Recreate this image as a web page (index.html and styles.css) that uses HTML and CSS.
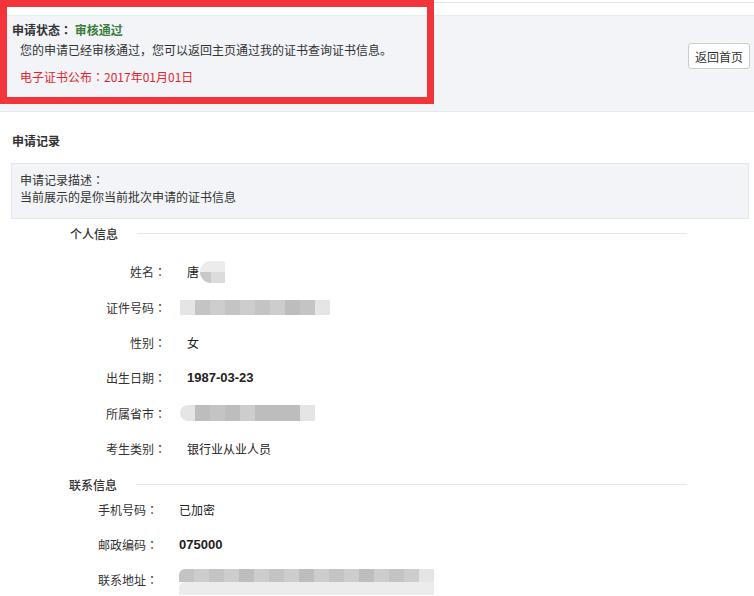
FILE: index.html
```html
<!DOCTYPE html>
<html lang="zh-CN">
<head>
  <meta charset="UTF-8">
  <meta name="viewport" content="width=device-width, initial-scale=1.0">
  <title>申请记录</title>
  <link rel="stylesheet" href="styles.css">
</head>
<body>
  <div class="topline"></div>

  <div class="status">
    <div class="status-text">
      <div class="status-title">申请状态<span class="colon">：</span> <span class="pass">审核通过</span></div>
      <div class="status-desc">您的申请已经审核通过，您可以返回主页通过我的证书查询证书信息。</div>
      <div class="status-date">电子证书公布<span class="colon">：</span>2017年01月01日</div>
    </div>
    <button class="btn-home">返回首页</button>
  </div>
  <div class="mark"></div>

  <h3 class="record-title">申请记录</h3>
  <div class="record-desc">
    申请记录描述<span class="colon">：</span><br>
    当前展示的是你当前批次申请的证书信息
  </div>

  <div class="group">
    <div class="group-head"><span>个人信息</span><i></i></div>
    <div class="row">
      <label>姓名<span class="colon">：</span></label>
      <span class="val">唐<b class="blur-name"><i></i><i></i></b></span>
    </div>
    <div class="row">
      <label>证件号码<span class="colon">：</span></label>
      <span class="mosaic id">
        <i class="m1"></i><i class="m3"></i><i class="m2"></i><i class="m3"></i><i class="m2"></i><i class="m3"></i><i class="m2"></i><i class="m4"></i><i class="m3"></i><i class="m1"></i>
      </span>
    </div>
    <div class="row">
      <label>性别<span class="colon">：</span></label>
      <span class="val">女</span>
    </div>
    <div class="row">
      <label>出生日期<span class="colon">：</span></label>
      <span class="val num">1987-03-23</span>
    </div>
    <div class="row">
      <label>所属省市<span class="colon">：</span></label>
      <span class="mosaic prov">
        <i class="m1"></i><i class="m4"></i><i class="m3"></i><i class="m4"></i><i class="m2"></i><i class="m4"></i><i class="m4"></i><i class="m4"></i><i class="m1"></i>
      </span>
    </div>
    <div class="row">
      <label>考生类别<span class="colon">：</span></label>
      <span class="val">银行业从业人员</span>
    </div>
  </div>

  <div class="group contact">
    <div class="group-head"><span>联系信息</span><i></i></div>
    <div class="row">
      <label>手机号码<span class="colon">：</span></label>
      <span class="val">已加密</span>
    </div>
    <div class="row">
      <label>邮政编码<span class="colon">：</span></label>
      <span class="val num">075000</span>
    </div>
    <div class="row">
      <label>联系地址<span class="colon">：</span></label>
      <span class="mosaic addr">
        <i class="m3"></i><i class="m2"></i><i class="m3"></i><i class="m2"></i><i class="m4"></i><i class="m2"></i><i class="m3"></i><i class="m2"></i><i class="m4"></i><i class="m2"></i><i class="m3"></i><i class="m2"></i><i class="m4"></i><i class="m2"></i><i class="m3"></i><i class="m2"></i><i class="m1"></i>
      </span>
    </div>
  </div>
</body>
</html>
```

FILE: styles.css
```css
body {
  margin: 0;
  font-family: "Noto Sans CJK SC", "Liberation Sans", sans-serif;
  font-size: 12px;
  color: #333;
  background: #fff;
  position: relative;
}
/* full-width colon sits centred in the original font */
.colon {
  font-family: "Noto Sans CJK JP", sans-serif;
  font-feature-settings: "locl" 0;
}
.topline {
  height: 2px;
  border-bottom: 1px solid #e3e3e3;
  margin-bottom: 12px;
}
.status {
  display: flex;
  background: #f2f4f8;
  border-top: 1px solid #e8ebf0;
  border-bottom: 1px solid #e8ebf0;
  height: 91px;
  padding: 4px 4px 0 12px;
}
.status-text {
  flex: 1;
}
.status-title {
  font-weight: bold;
  line-height: 20px;
  color: #333;
}
.pass {
  color: #3c7d3c;
}
.status-desc {
  line-height: 20px;
  padding-left: 8px;
}
.status-date {
  line-height: 20px;
  margin-top: 7px;
  padding-left: 8px;
  color: #e6262e;
}
.btn-home {
  align-self: flex-start;
  margin-top: 23px;
  height: 26px;
  padding: 0 6px;
  font: inherit;
  color: #333;
  background: #fff;
  border: 1px solid #ccc;
  border-radius: 3px;
}
.mark {
  position: absolute;
  left: 0;
  top: 0;
  width: 420px;
  height: 90px;
  border: 7px solid #f2353a;
}
.record-title {
  margin: 0;
  padding: 19px 12px 0;
  font-size: 12px;
  line-height: 20px;
  color: #333;
}
.record-desc {
  margin: 12px 5px 0 11px;
  padding: 7px 8px 13px;
  line-height: 17px;
  background: #f2f4f8;
  border: 1px solid #e4e7ec;
}
.group {
  padding-left: 70px;
  width: 617px;
}
.group-head {
  display: flex;
  align-items: center;
  height: 20px;
  margin-top: 4px;
  margin-bottom: 11px;
  color: #333;
  font-weight: 500;
}
.group-head i {
  flex: 1;
  height: 1px;
  margin-left: 19px;
  background: #e6e6e6;
}
.row {
  display: flex;
  align-items: center;
  height: 35.4px;
}
.row label {
  width: 96px;
  text-align: right;
  color: #333;
}
.val {
  margin-left: 21px;
  color: #222;
  display: flex;
  align-items: center;
}
.num {
  font-family: "Liberation Sans", sans-serif;
  font-weight: bold;
  font-size: 13px;
}
.contact {
  padding-left: 69px;
  width: 618px;
}
.contact .group-head {
  height: 14px;
  margin-top: 11px;
  margin-bottom: 0;
}
.contact .row label {
  width: 89px;
}
.contact .val,
.contact .mosaic {
  margin-left: 21px;
}
.blur-name {
  display: flex;
  flex-direction: column;
  width: 25px;
  height: 22px;
  margin-left: 1px;
  border-radius: 11px 3px 0 11px;
  overflow: hidden;
}
.blur-name i:first-child {
  flex: 1;
  background: #ececec;
}
.blur-name i:last-child {
  flex: 1;
  background: linear-gradient(90deg, #c9c9c9 0 45%, #dcdcdc 45%);
}
.mosaic {
  display: flex;
  height: 15px;
  margin-left: 14px;
}
.mosaic i {
  flex: 1;
}
.mosaic .m1 { background: #e5e5e5; }
.mosaic .m2 { background: #cdcdcd; }
.mosaic .m3 { background: #c4c4c4; }
.mosaic .m4 { background: #bdbdbd; }
.id {
  width: 150px;
}
.prov {
  width: 135px;
  height: 16px;
  border-radius: 8px 0 0 8px;
  overflow: hidden;
}
.addr {
  width: 255px;
  height: 13px;
  margin-bottom: 9px;
  border-radius: 6px 0 0 0;
  overflow: hidden;
  box-shadow: 0 13px 0 #ececec;
}
```
